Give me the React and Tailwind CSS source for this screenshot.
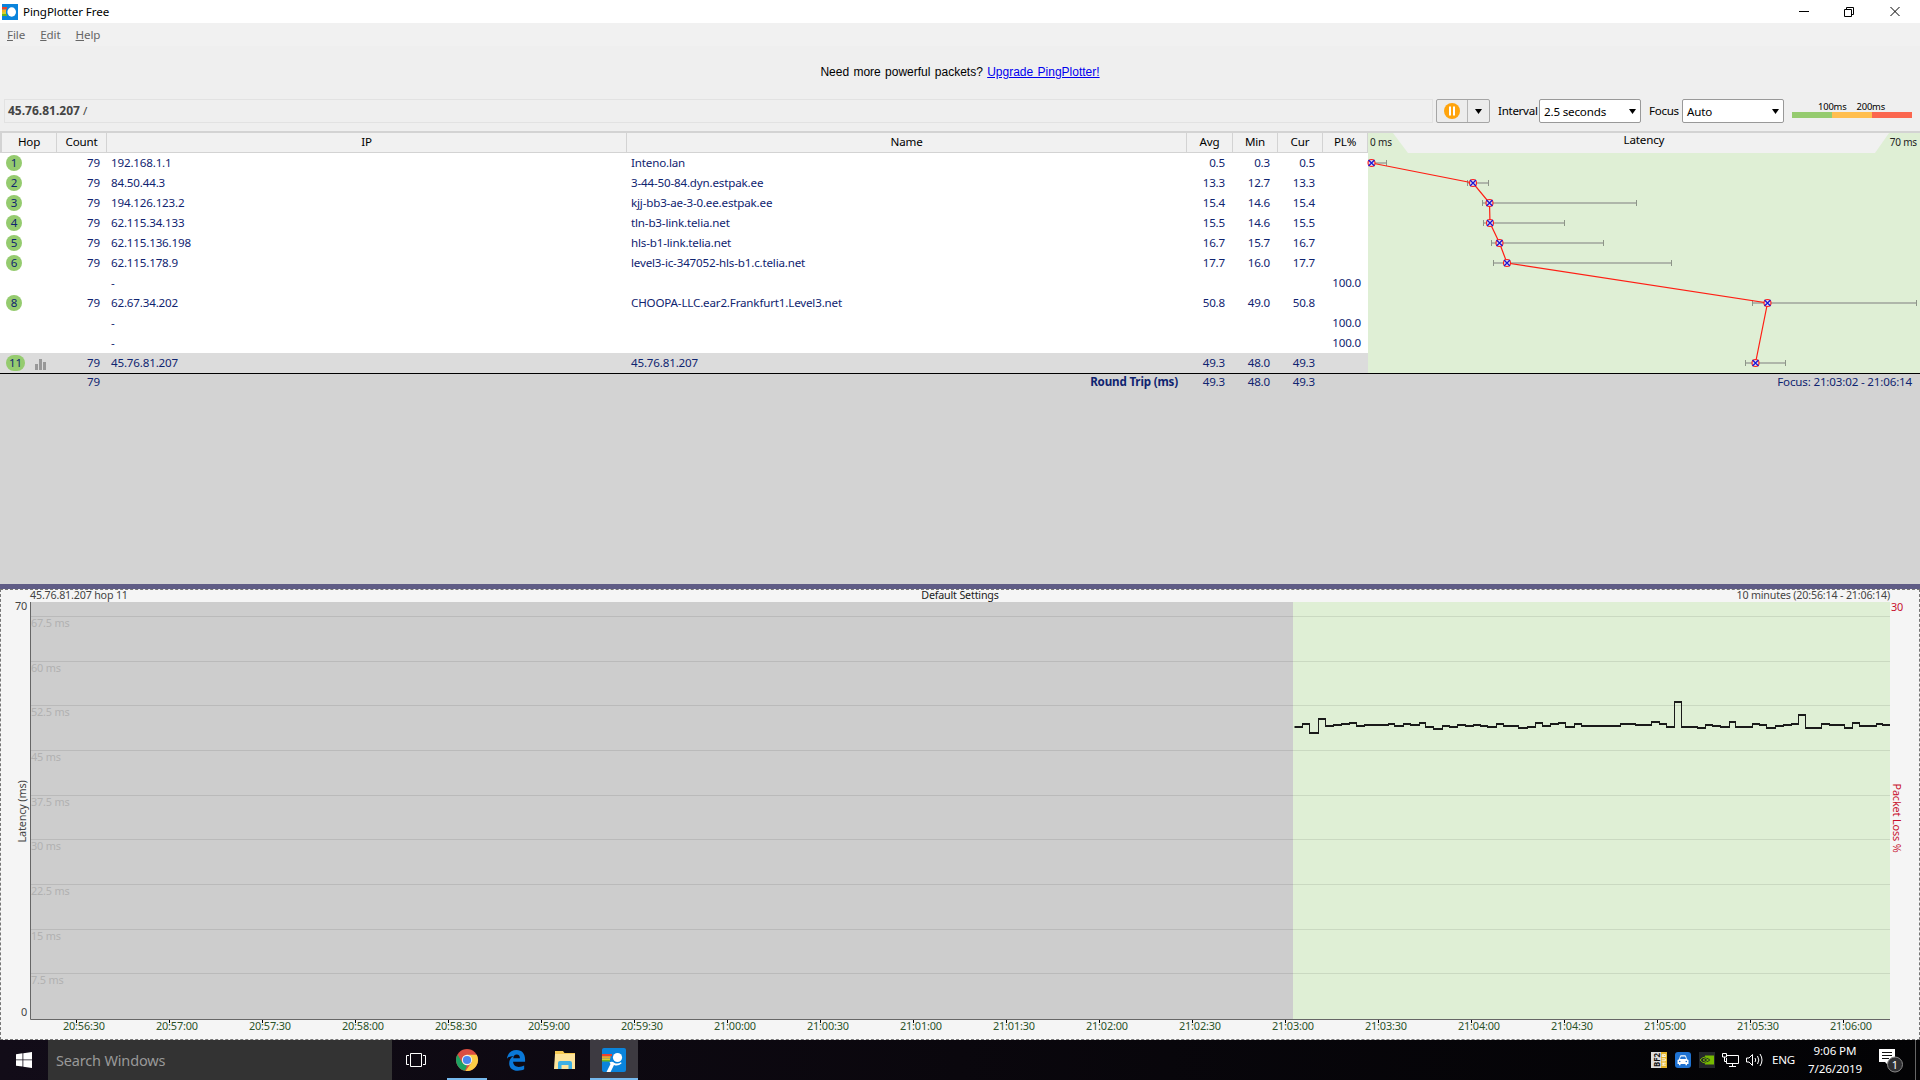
import React from "react";

const hops = [
  { hop: 1, count: 79, ip: "192.168.1.1", name: "Inteno.lan", avg: "0.5", min: "0.3", cur: "0.5", x: 3.5, lo: 1, hi: 18 },
  { hop: 2, count: 79, ip: "84.50.44.3", name: "3-44-50-84.dyn.estpak.ee", avg: "13.3", min: "12.7", cur: "13.3", x: 105, lo: 99, hi: 120 },
  { hop: 3, count: 79, ip: "194.126.123.2", name: "kjj-bb3-ae-3-0.ee.estpak.ee", avg: "15.4", min: "14.6", cur: "15.4", x: 121.5, lo: 114, hi: 268 },
  { hop: 4, count: 79, ip: "62.115.34.133", name: "tln-b3-link.telia.net", avg: "15.5", min: "14.6", cur: "15.5", x: 122, lo: 115, hi: 196 },
  { hop: 5, count: 79, ip: "62.115.136.198", name: "hls-b1-link.telia.net", avg: "16.7", min: "15.7", cur: "16.7", x: 131.5, lo: 123, hi: 235 },
  { hop: 6, count: 79, ip: "62.115.178.9", name: "level3-ic-347052-hls-b1.c.telia.net", avg: "17.7", min: "16.0", cur: "17.7", x: 139, lo: 125, hi: 303 },
  { ip: "-", pl: "100.0" },
  { hop: 8, count: 79, ip: "62.67.34.202", name: "CHOOPA-LLC.ear2.Frankfurt1.Level3.net", avg: "50.8", min: "49.0", cur: "50.8", x: 399.5, lo: 384, hi: 548 },
  { ip: "-", pl: "100.0" },
  { ip: "-", pl: "100.0" },
  { hop: 11, count: 79, ip: "45.76.81.207", name: "45.76.81.207", avg: "49.3", min: "48.0", cur: "49.3", x: 387.5, lo: 377, hi: 417, selected: true },
];

// [x, y] where each sample of the timeline starts
const samples = [
  [1295, 727], [1302.5, 724], [1309.5, 733], [1318.5, 719], [1325.5, 726], [1333.5, 725], [1341.5, 724], [1349.5, 723],
  [1356.5, 726], [1364.5, 725], [1388.5, 724], [1394.5, 726], [1403.5, 724], [1410.5, 725], [1419.5, 723], [1425.5, 727],
  [1433.5, 729], [1442.5, 726], [1449.5, 727], [1457.5, 725], [1465.5, 726], [1473.5, 725], [1480.5, 726], [1487.5, 727],
  [1496.5, 724], [1503.5, 726], [1518.5, 728], [1527.5, 727], [1535.5, 723], [1542.5, 726], [1550.5, 724], [1558.5, 723],
  [1565.5, 727], [1574.5, 724], [1581.5, 726], [1620.5, 724], [1635.5, 725], [1651.5, 722], [1659.5, 724], [1666.5, 727],
  [1674.5, 702], [1681.5, 727], [1697.5, 728], [1705.5, 725], [1712.5, 726], [1720.5, 727], [1729.5, 722], [1735.5, 727],
  [1752.5, 724], [1759.5, 725], [1766.5, 728], [1775.5, 726], [1783.5, 725], [1791.5, 724], [1798.5, 715], [1805.5, 728],
  [1821.5, 724], [1829.5, 725], [1844.5, 728], [1852.5, 723], [1859.5, 726], [1876.5, 724], [1882.5, 725],
];

const times = [
  "20:56:30", "20:57:00", "20:57:30", "20:58:00", "20:58:30", "20:59:00", "20:59:30", "21:00:00", "21:00:30", "21:01:00",
  "21:01:30", "21:02:00", "21:02:30", "21:03:00", "21:03:30", "21:04:00", "21:04:30", "21:05:00", "21:05:30", "21:06:00",
];

const gridLines = [
  [616, "67.5 ms"], [661, "60 ms"], [705, "52.5 ms"], [750, "45 ms"], [795, "37.5 ms"],
  [839, "30 ms"], [884, "22.5 ms"], [929, "15 ms"], [973, "7.5 ms"],
];

const columns = "grid grid-cols-[57px_50px_520px_560px_46px_45px_45px_45px]";

export default function App() {
  return (
    <div className="flex h-[1080px] w-[1920px] flex-col overflow-hidden bg-[#efefef] font-['Noto_Sans',sans-serif] text-[11.6px] leading-[20px] tracking-[-0.17px] text-black">
      <TitleBar />
      <MenuBar />
      <div className="flex h-[52px] items-center justify-center font-['Liberation_Sans',sans-serif] text-[12px] tracking-normal [word-spacing:1px]">
        <p>
          Need more powerful packets?{" "}
          <a href="#" className="text-[#0000ee] underline">
            Upgrade PingPlotter!
          </a>
        </p>
      </div>
      <Toolbar />
      <TraceTable />
      <div className="h-[5px] shrink-0 bg-[#5f5c85]" />
      <Timeline />
      <Taskbar />
    </div>
  );
}

const TitleBar = () => (
  <header className="flex h-[23px] shrink-0 items-center bg-white pl-0.5">
    <svg width="16" height="16" viewBox="0 0 16 16">
      <rect width="16" height="16" fill="#0a84dc" />
      <path d="M0 3h5v2.500H0z" fill="#e8432c" />
      <path d="M0 5.500h4v2.500H0z" fill="#f5b324" />
      <path d="M0 8h4v2H0z" fill="#d8cf2c" />
      <path d="M0 10h5v2H0z" fill="#68b421" />
      <circle cx="9.300" cy="8" r="5.300" fill="#0a84dc" />
      <ellipse cx="9.700" cy="8" rx="4.300" ry="4.700" fill="#fff" />
    </svg>
    <span className="ml-[5px] tracking-[-0.1px]">PingPlotter Free</span>
    <svg width="120" height="20" viewBox="0 0 120 20" className="ml-auto mr-[13px]" fill="none" stroke="#000" strokeWidth="1">
      <path d="M12 9.500h10M57.500 7.500h7v7h-7zM59.500 7.500v-2h7v7h-2M103.500 5l9 9M112.500 5l-9 9" />
    </svg>
  </header>
);

const MenuBar = () => (
  <nav className="flex h-[23px] shrink-0 items-center gap-[15px] bg-[#f1f1f1] pl-[7px] tracking-[-0.1px] text-[#666]">
    {["File", "Edit", "Help"].map((item) => (
      <span key={item}>
        <u>{item[0]}</u>
        {item.slice(1)}
      </span>
    ))}
  </nav>
);

const Select = ({ value }) => (
  <div className="flex h-6 w-[102px] items-center justify-between rounded-[2px] border border-[#999] bg-white pl-1 pr-1">
    <span className="pt-0.5">{value}</span>
    <Caret />
  </div>
);

const Caret = () => (
  <svg width="7" height="5" viewBox="0 0 7 5">
    <path d="M0 0h7L3.500 5z" />
  </svg>
);

const Toolbar = () => (
  <div className="flex h-[33px] shrink-0 items-start pt-px">
    <div className="ml-1 flex h-6 w-[1429px] items-center border border-[#e2e2e2] pl-[3px] text-[#444]">
      <b className="text-[12px] tracking-normal">45.76.81.207</b>
      <span className="ml-[3px]">/</span>
    </div>
    <div className="ml-[3px] flex h-6 w-[54px] rounded-[2px] border border-[#a5a5a5] bg-[#ececec]">
      <div className="flex w-[31px] items-center justify-center border-r border-[#b5b5b5]">
        <svg width="16" height="16" viewBox="0 0 16 16">
          <circle cx="8" cy="8" r="8" fill="#ffa40d" />
          <path d="M6 3.500v9M10 3.500v9" stroke="#fff" strokeWidth="2" />
        </svg>
      </div>
      <div className="flex flex-1 items-center justify-center">
        <Caret />
      </div>
    </div>
    <span className="ml-2 mt-0.5 w-[41px] tracking-[-0.3px]">Interval</span>
    <Select value="2.5 seconds" />
    <span className="ml-2 mt-0.5 w-[33px] tracking-[-0.3px]">Focus</span>
    <Select value="Auto" />
    <div className="ml-2 w-[120px] pt-[3px] text-[9.400px] leading-[10px]">
      <div className="flex gap-[10px] pl-[26px]">
        <span>100ms</span>
        <span>200ms</span>
      </div>
      <div className="flex h-1.5">
        <div className="flex-1 bg-[#95cb6f]" />
        <div className="flex-1 bg-[#ffbe4f]" />
        <div className="flex-1 bg-[#fb664f]" />
      </div>
    </div>
  </div>
);

const TraceTable = () => (
  <section className="flex h-[453px] shrink-0 flex-col border-t-2 border-[#d3d3d3] bg-[#d3d3d3] text-[#0f2470]">
    <div className="flex h-[240px] shrink-0">
      <div className="w-[1368px]">
        <div className={`${columns} h-5 border-b border-[#d3d3d3] bg-[#f1f1f1] text-center leading-[18px] text-black`}>
          {["Hop", "Count", "IP", "Name", "Avg", "Min", "Cur", "PL%"].map((label) => (
            <span key={label} className="border-r border-[#d3d3d3] first:border-l-2">
              {label}
            </span>
          ))}
        </div>
        {hops.map((row, i) => (
          <div key={i} className={`${columns} h-5 ${row.selected ? "bg-[#dcdcdc]" : "bg-white"}`}>
            <div className="flex items-center gap-[10px] pl-1.5">
              {row.hop && (
                <span className={`h-4 rounded-full bg-[#95cb6f] text-center leading-[15px] ${row.hop > 9 ? "w-[19px]" : "w-4"}`}>
                  {row.hop}
                </span>
              )}
              {row.selected && (
                <svg width="11" height="11" viewBox="0 0 11 11" fill="#999" className="mt-0.5">
                  <path d="M0 5h3v6H0zM4 0h3v11H4zM8 3h3v8H8z" />
                </svg>
              )}
            </div>
            <span className="pr-[7px] text-right">{row.count}</span>
            <span className="pl-1">{row.ip}</span>
            <span className="pl-1">{row.name}</span>
            <span className="pr-2 text-right">{row.avg}</span>
            <span className="pr-2 text-right">{row.min}</span>
            <span className="pr-2 text-right">{row.cur}</span>
            <span className="pr-[7px] text-right">{row.pl}</span>
          </div>
        ))}
      </div>
      <LatencyGraph />
    </div>
    <div className="flex h-4 shrink-0 items-center border-t border-black leading-[16px]">
      <span className="w-[100px] text-right">79</span>
      <b className="w-[1078px] text-right">Round Trip (ms)</b>
      <span className="w-[47px] text-right">49.3</span>
      <span className="w-[45px] text-right">48.0</span>
      <span className="w-[45px] text-right">49.3</span>
      <span className="ml-auto pr-2">Focus: 21:03:02 - 21:06:14</span>
    </div>
  </section>
);

const LatencyGraph = () => {
  const points = hops
    .map((h, i) => ({ ...h, y: 30 + i * 20 }))
    .filter((h) => h.hop);

  return (
    <svg width="552" height="240" viewBox="0 0 552 240" className="overflow-visible">
      <rect width="552" height="240" fill="#dfefd5" />
      <path d="M25 0H521L507 20H40z" fill="#f1f1f1" />
      <g fontSize="10" fill="#222">
        <text x="2" y="13">0 ms</text>
        <text x="549" y="13" textAnchor="end">70 ms</text>
      </g>
      <text x="276" y="11" textAnchor="middle" fill="#000">Latency</text>
      {points.map((p) => (
        <g key={p.hop}>
          <path d={`M${p.lo} ${p.y}H${p.hi}`} stroke="#afb6aa" strokeWidth="2" />
          <path d={`M${p.lo + 0.5} ${p.y - 3}v6M${p.hi + 0.5} ${p.y - 3}v6`} stroke="#8d9588" />
        </g>
      ))}
      <polyline points={points.map((p) => `${p.x},${p.y}`).join(" ")} fill="none" stroke="#ff1e14" strokeWidth="1.200" />
      {points.map((p) => (
        <g key={p.hop} fill="none">
          <circle cx={p.x} cy={p.y} r="3.500" fill="#e3d9e6" stroke="#ff1e1e" strokeWidth="1.100" />
          <path d={`M${p.x - 3} ${p.y - 3}l6 6m0 -6l-6 6`} stroke="#1616d8" strokeWidth="1.200" />
        </g>
      ))}
    </svg>
  );
};

const Timeline = () => {
  const levels = samples.map(([x, y], i) => `M${x - 0.5} ${y}H${(samples[i + 1]?.[0] ?? 1889.5) + 0.5}`).join("");
  const steps = samples.slice(1).map(([x, y], i) => `M${x} ${samples[i][1]}V${y}`).join("");

  return (
    <section className="h-[451px] shrink-0 border border-dashed border-[#777] bg-[#f5f5f5]">
      <div className="grid h-3 grid-cols-3 pl-[29px] pr-[29px] text-[10.700px] leading-[11px] text-[#444]">
        <span>45.76.81.207 hop 11</span>
        <span className="text-center text-[#222]">Default Settings</span>
        <span className="text-right">10 minutes (20:56:14 - 21:06:14)</span>
      </div>
      <svg width="1918" height="437" viewBox="1 602 1918 437" fontSize="10.900" className="overflow-visible">
        <rect x="30" y="602" width="1263" height="417" fill="#cdcdcd" />
        <rect x="1293" y="602" width="597" height="417" fill="#dfefd5" />
        {gridLines.map(([y, label]) => (
          <g key={y}>
            <path d={`M31 ${y + 0.5}H1890`} stroke="#000" strokeOpacity="0.09" />
            <text x="31" y={y + 11} fill="#b1b1b1">{label}</text>
          </g>
        ))}
        <path d="M30.500 602V1019.500H1890" fill="none" stroke="#666" />
        <path d={levels} fill="none" stroke="#1a1a1a" strokeWidth="2" />
        <path d={steps} fill="none" stroke="#1a1a1a" />
        {times.map((time, i) => (
          <g key={time}>
            <path d={`M${76.5 + i * 93} 1020v3`} stroke="#000" />
            <text x={63 + i * 93} y="1030" fill="#2b5228">{time}</text>
          </g>
        ))}
        <g fill="#444">
          <text x="27" y="609.500" textAnchor="end">70</text>
          <text x="27" y="1016" textAnchor="end">0</text>
          <text transform="translate(26 811.500) rotate(-90)" textAnchor="middle">Latency (ms)</text>
        </g>
        <g fill="#c8102e">
          <text x="1891" y="611">30</text>
          <text transform="translate(1893 818) rotate(90)" textAnchor="middle">Packet Loss %</text>
        </g>
      </svg>
    </section>
  );
};

const Taskbar = () => (
  <footer className="flex h-10 shrink-0 bg-linear-to-r from-[#120c18] via-[#0a070d] to-[#030305] text-white">
    <div className="flex w-12 items-center justify-center">
      <svg width="16" height="16" viewBox="0 0 16 16" fill="#fff">
        <path d="M0 2.200L6.500 1.300V7.500H0zM7.300 1.200L16 0V7.500H7.300zM0 8.300H6.500V14.600L0 13.800zM7.300 8.300H16V16L7.300 14.800z" />
      </svg>
    </div>
    <div className="flex w-[344px] items-center bg-[#333] pl-2 text-[14.500px] text-[#999]">Search Windows</div>
    <div className="mr-[3px] flex w-12 items-center justify-center">
      <svg width="20" height="16" viewBox="0 0 20 16" fill="none" stroke="#fff">
        <path d="M4.500 1.500h11v13h-11zM3 3.500H.500v9H3M17 3.500h2.500v9H17" />
      </svg>
    </div>
    <TaskButton running>
      <svg width="24" height="24" viewBox="0 0 24 24">
        <circle cx="12" cy="12" r="11" fill="#db4d41" />
        <path d="M2.500 6.500L7.500 15 12 17.500 10 22.800A11 11 0 0 1 2.500 6.500" fill="#1da362" />
        <path d="M12 6.800H21.700A11 11 0 0 1 10.500 22.900L17 14z" fill="#fccd45" />
        <circle cx="12" cy="12" r="5.200" fill="#f3f1ea" />
        <circle cx="12" cy="12" r="4.100" fill="#4a86ee" />
      </svg>
    </TaskButton>
    <TaskButton>
      <svg width="20" height="22" viewBox="0 0 22 24" fill="#0a78d7">
        <path d="M1 10.500C2 4 6 1 11.500 1 18 1 21 5.500 21 11.500V14H7.800C8 18 11 19.600 14 19.600c2.300 0 4.300-.6 6-1.600v4.200c-2 1.100-4.300 1.600-7 1.600C7 23.800 3.500 20.500 3.500 15.500c0-3.700 1.800-6.500 5-8C5.500 7.600 3 8.500 1 10.500M8 10.200h7.300c0-2.500-1-4.200-3.500-4.200S8.300 7.800 8 10.200" />
      </svg>
    </TaskButton>
    <TaskButton>
      <svg width="24" height="24" viewBox="0 0 24 24">
        <path d="M2 3h8l1.500 2H22v15H2z" fill="#f6ca53" />
        <path d="M2 6h20v15H1z" fill="#fde49b" />
        <path d="M5 21v-6q0-2 2-2h10q2 0 2 2v6h-3.500v-4h-7V21z" fill="#3db0e4" />
      </svg>
    </TaskButton>
    <TaskButton running active>
      <svg width="24" height="24" viewBox="0 0 24 24">
        <rect width="24" height="24" rx="2" fill="#0a84dc" />
        <path d="M0 6h10v2.200H0z" fill="#f0402c" />
        <path d="M0 8.200h8.500v2.300H0z" fill="#f5a524" />
        <path d="M0 10.500h8v1.500H0z" fill="#d8cf2c" />
        <path d="M0 12h8v1.500H0z" fill="#68b421" />
        <path d="M7.500 14.500q2.500-1.500 5 .5 3.500 1.500 6.500-1l.5 1.500q-3.500 3-7.500 1.500L8.500 24H4.500l4-8z" fill="#fff" />
        <circle cx="15.500" cy="9.500" r="5.600" fill="#0a84dc" />
        <circle cx="15.500" cy="9.500" r="4.600" fill="#fff" />
      </svg>
    </TaskButton>
    <Tray />
  </footer>
);

const TaskButton = ({ children, running, active }) => (
  <div className={`mr-px flex w-12 flex-col items-center ${active ? "bg-[#3d3a41]" : ""}`}>
    <div className="flex h-[38px] items-center pt-0.5">{children}</div>
    {running && <div className={`h-0.5 bg-[#76b9ed] ${active ? "w-12" : "w-10"}`} />}
  </div>
);

const Tray = () => (
  <div className="ml-auto flex items-center tracking-normal">
    <svg width="16" height="16" viewBox="0 0 16 16">
      <rect width="10" height="16" fill="#ddd" />
      <rect x="10" width="6" height="16" fill="#e5b52a" />
      <text transform="translate(8.500 15) rotate(-90)" fontSize="8" fontWeight="bold" textLength="14" lengthAdjust="spacingAndGlyphs" fill="#111">BF2</text>
      <text transform="translate(15 14) rotate(-90)" fontSize="5" fontWeight="bold" textLength="12" fill="#fff">HUB</text>
    </svg>
    <svg width="16" height="16" viewBox="0 0 16 16" className="ml-2">
      <rect width="16" height="16" rx="3" fill="#1e72d2" />
      <path d="M2.500 8L4 7.200 5 4q.3-.7 1-.7h4q.7 0 1 .7l1 3.200 1.500.8v4H12v1.200h-1.500V12h-5v1.200H4V12H2.500zM5 7h6l-.8-2.600H5.800z" fill="#fff" />
      <circle cx="4.700" cy="9.500" r=".8" fill="#1e72d2" />
      <circle cx="11.300" cy="9.500" r=".8" fill="#1e72d2" />
    </svg>
    <svg width="16" height="16" viewBox="0 0 16 16" className="ml-2">
      <rect width="16" height="16" fill="#24272b" />
      <path d="M6 3.500h9v9H6z" fill="#76b900" />
      <path d="M1 8q5-6 11 0-6 6-11 0" fill="#24272b" stroke="#76b900" />
      <path d="M4 8q2.500-3 5.500 0-3 3-5.500 0" fill="none" stroke="#76b900" />
    </svg>
    <svg width="17" height="16" viewBox="0 0 17 16" className="ml-[7px]" fill="none" stroke="#fff">
      <path d="M5 3.500h11.500v8H4.500V6M10.500 11.500v3M7 14.500h7M.500 1.500h4v3.500h-4zM2.500 5v4.500h2" />
    </svg>
    <svg width="17" height="16" viewBox="0 0 17 16" className="ml-[7px]" fill="none" stroke="#fff">
      <path d="M.500 6v4H3l3.500 3.500v-11L3 6zM9 6q1.500 2 0 4M11.500 4q2.700 4 0 8M14 2q4 6 0 12" />
    </svg>
    <span className="ml-[9px] w-6 tracking-[-0.2px]">ENG</span>
    <div className="ml-[9px] w-[60px] text-center leading-[18px] tracking-[-0.1px]">
      <div>9:06 PM</div>
      <div>7/26/2019</div>
    </div>
    <svg width="26" height="28" viewBox="0 0 26 28" className="ml-[14px]">
      <path d="M0 3h16v13H9v3L6 16H0z" fill="#fff" />
      <path d="M3 6.500h10M3 9.500h10M3 12.500h7" stroke="#111" />
      <circle cx="16" cy="18.500" r="7.500" fill="#303033" stroke="#888" />
      <text x="16" y="22.500" fontSize="11" textAnchor="middle" fill="#fff">1</text>
    </svg>
    <div className="ml-2.5 mr-[4px] h-full w-px bg-[#666]" />
  </div>
);
